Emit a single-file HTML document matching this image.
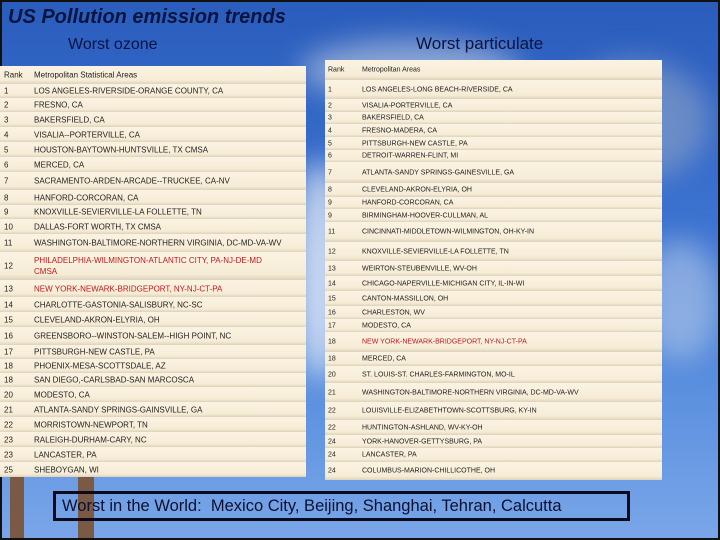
<!DOCTYPE html><html><head><style>
body{margin:0;width:720px;height:540px;overflow:hidden;font-family:"Liberation Sans",sans-serif}
#bg{position:absolute;left:0;top:0;width:720px;height:540px;background:linear-gradient(180deg,#2a5cbc 0%,#3c72d0 40%,#5d92e0 75%,#7aa6e8 100%);}
.cl{position:absolute;border-radius:50%;filter:blur(14px);background:rgba(235,240,248,.8)}
.r{position:absolute;background:linear-gradient(180deg,#fbf3e2 0%,#f6ecd6 80%,#ddd3bd 100%);color:#222;white-space:nowrap}
.r span{position:absolute;top:50%;transform:translateY(-50%)}
.L{left:0;width:306px;font-size:8px}
.L .a{left:4px}.L .b{left:34px}
.R{left:325px;width:337px;font-size:7px}
.R .a{left:3px}.R .b{left:37px}
.red{color:#c0191c}
</style></head><body>
<div id="bg"></div>
<div class="cl" style="left:300px;top:40px;width:220px;height:60px;background:rgba(200,210,225,.6)"></div>
<div class="cl" style="left:560px;top:60px;width:150px;height:120px;background:rgba(160,175,200,.5)"></div>
<div class="cl" style="left:295px;top:160px;width:50px;height:220px"></div>
<div class="cl" style="left:640px;top:240px;width:80px;height:120px;background:rgba(200,215,235,.5)"></div>
<div style="position:absolute;left:10px;top:470px;width:14px;height:70px;background:#7a5a44"></div>
<div style="position:absolute;left:78px;top:470px;width:16px;height:70px;background:#7a5a44"></div>
<div style="position:absolute;left:0;top:0;width:720px;height:540px;box-sizing:border-box;border:2px solid #111"></div>
<div style="position:absolute;left:8px;top:6px;font-size:20px;font-weight:bold;font-style:italic;color:#0a1440">US Pollution emission trends</div>
<div style="position:absolute;left:68px;top:36px;font-size:16px;color:#0a1440">Worst ozone</div>
<div style="position:absolute;left:416px;top:34px;font-size:17px;color:#0a1440">Worst particulate</div>

<div class="r L" style="top:66px;height:18px"><span class="a">Rank</span><span class="b">Metropolitan Statistical Areas</span></div>
<div class="r L" style="top:84px;height:14px"><span class="a">1</span><span class="b">LOS ANGELES-RIVERSIDE-ORANGE COUNTY, CA</span></div>
<div class="r L" style="top:98px;height:14px"><span class="a">2</span><span class="b">FRESNO, CA</span></div>
<div class="r L" style="top:112px;height:15px"><span class="a">3</span><span class="b">BAKERSFIELD, CA</span></div>
<div class="r L" style="top:127px;height:15px"><span class="a">4</span><span class="b">VISALIA--PORTERVILLE, CA</span></div>
<div class="r L" style="top:142px;height:15px"><span class="a">5</span><span class="b">HOUSTON-BAYTOWN-HUNTSVILLE, TX CMSA</span></div>
<div class="r L" style="top:157px;height:15px"><span class="a">6</span><span class="b">MERCED, CA</span></div>
<div class="r L" style="top:172px;height:18px"><span class="a">7</span><span class="b">SACRAMENTO-ARDEN-ARCADE--TRUCKEE, CA-NV</span></div>
<div class="r L" style="top:190px;height:15px"><span class="a">8</span><span class="b">HANFORD-CORCORAN, CA</span></div>
<div class="r L" style="top:205px;height:14px"><span class="a">9</span><span class="b">KNOXVILLE-SEVIERVILLE-LA FOLLETTE, TN</span></div>
<div class="r L" style="top:219px;height:15px"><span class="a">10</span><span class="b">DALLAS-FORT WORTH, TX CMSA</span></div>
<div class="r L" style="top:234px;height:18px"><span class="a">11</span><span class="b">WASHINGTON-BALTIMORE-NORTHERN VIRGINIA, DC-MD-VA-WV</span></div>
<div class="r L" style="top:252px;height:28px"><span class="a">12</span><span class="b red" style="line-height:11px">PHILADELPHIA-WILMINGTON-ATLANTIC CITY, PA-NJ-DE-MD<br>CMSA</span></div>
<div class="r L" style="top:280px;height:17px"><span class="a">13</span><span class="b red">NEW YORK-NEWARK-BRIDGEPORT, NY-NJ-CT-PA</span></div>
<div class="r L" style="top:297px;height:15px"><span class="a">14</span><span class="b">CHARLOTTE-GASTONIA-SALISBURY, NC-SC</span></div>
<div class="r L" style="top:312px;height:15px"><span class="a">15</span><span class="b">CLEVELAND-AKRON-ELYRIA, OH</span></div>
<div class="r L" style="top:327px;height:18px"><span class="a">16</span><span class="b">GREENSBORO--WINSTON-SALEM--HIGH POINT, NC</span></div>
<div class="r L" style="top:345px;height:14px"><span class="a">17</span><span class="b">PITTSBURGH-NEW CASTLE, PA</span></div>
<div class="r L" style="top:359px;height:14px"><span class="a">18</span><span class="b">PHOENIX-MESA-SCOTTSDALE, AZ</span></div>
<div class="r L" style="top:373px;height:14px"><span class="a">18</span><span class="b">SAN DIEGO,-CARLSBAD-SAN MARCOSCA</span></div>
<div class="r L" style="top:387px;height:15px"><span class="a">20</span><span class="b">MODESTO, CA</span></div>
<div class="r L" style="top:402px;height:15px"><span class="a">21</span><span class="b">ATLANTA-SANDY SPRINGS-GAINSVILLE, GA</span></div>
<div class="r L" style="top:417px;height:15px"><span class="a">22</span><span class="b">MORRISTOWN-NEWPORT, TN</span></div>
<div class="r L" style="top:432px;height:15px"><span class="a">23</span><span class="b">RALEIGH-DURHAM-CARY, NC</span></div>
<div class="r L" style="top:447px;height:15px"><span class="a">23</span><span class="b">LANCASTER, PA</span></div>
<div class="r L" style="top:462px;height:15px"><span class="a">25</span><span class="b">SHEBOYGAN, WI</span></div>

<div class="r R" style="top:60px;height:20px"><span class="a">Rank</span><span class="b">Metropolitan Areas</span></div>
<div class="r R" style="top:80px;height:19px"><span class="a">1</span><span class="b">LOS ANGELES-LONG BEACH-RIVERSIDE, CA</span></div>
<div class="r R" style="top:99px;height:13px"><span class="a">2</span><span class="b">VISALIA-PORTERVILLE, CA</span></div>
<div class="r R" style="top:112px;height:12px"><span class="a">3</span><span class="b">BAKERSFIELD, CA</span></div>
<div class="r R" style="top:124px;height:13px"><span class="a">4</span><span class="b">FRESNO-MADERA, CA</span></div>
<div class="r R" style="top:137px;height:13px"><span class="a">5</span><span class="b">PITTSBURGH-NEW CASTLE, PA</span></div>
<div class="r R" style="top:150px;height:12px"><span class="a">6</span><span class="b">DETROIT-WARREN-FLINT, MI</span></div>
<div class="r R" style="top:162px;height:21px"><span class="a">7</span><span class="b">ATLANTA-SANDY SPRINGS-GAINESVILLE, GA</span></div>
<div class="r R" style="top:183px;height:14px"><span class="a">8</span><span class="b">CLEVELAND-AKRON-ELYRIA, OH</span></div>
<div class="r R" style="top:197px;height:12px"><span class="a">9</span><span class="b">HANFORD-CORCORAN, CA</span></div>
<div class="r R" style="top:209px;height:13px"><span class="a">9</span><span class="b">BIRMINGHAM-HOOVER-CULLMAN, AL</span></div>
<div class="r R" style="top:222px;height:20px"><span class="a">11</span><span class="b">CINCINNATI-MIDDLETOWN-WILMINGTON, OH-KY-IN</span></div>
<div class="r R" style="top:242px;height:19px"><span class="a">12</span><span class="b">KNOXVILLE-SEVIERVILLE-LA FOLLETTE, TN</span></div>
<div class="r R" style="top:261px;height:15px"><span class="a">13</span><span class="b">WEIRTON-STEUBENVILLE, WV-OH</span></div>
<div class="r R" style="top:276px;height:15px"><span class="a">14</span><span class="b">CHICAGO-NAPERVILLE-MICHIGAN CITY, IL-IN-WI</span></div>
<div class="r R" style="top:291px;height:15px"><span class="a">15</span><span class="b">CANTON-MASSILLON, OH</span></div>
<div class="r R" style="top:306px;height:13px"><span class="a">16</span><span class="b">CHARLESTON, WV</span></div>
<div class="r R" style="top:319px;height:13px"><span class="a">17</span><span class="b">MODESTO, CA</span></div>
<div class="r R" style="top:332px;height:20px"><span class="a">18</span><span class="b red">NEW YORK-NEWARK-BRIDGEPORT, NY-NJ-CT-PA</span></div>
<div class="r R" style="top:352px;height:14px"><span class="a">18</span><span class="b">MERCED, CA</span></div>
<div class="r R" style="top:366px;height:17px"><span class="a">20</span><span class="b">ST. LOUIS-ST. CHARLES-FARMINGTON, MO-IL</span></div>
<div class="r R" style="top:383px;height:19px"><span class="a">21</span><span class="b">WASHINGTON-BALTIMORE-NORTHERN VIRGINIA, DC-MD-VA-WV</span></div>
<div class="r R" style="top:402px;height:18px"><span class="a">22</span><span class="b">LOUISVILLE-ELIZABETHTOWN-SCOTTSBURG, KY-IN</span></div>
<div class="r R" style="top:420px;height:15px"><span class="a">22</span><span class="b">HUNTINGTON-ASHLAND, WV-KY-OH</span></div>
<div class="r R" style="top:435px;height:13px"><span class="a">24</span><span class="b">YORK-HANOVER-GETTYSBURG, PA</span></div>
<div class="r R" style="top:448px;height:14px"><span class="a">24</span><span class="b">LANCASTER, PA</span></div>
<div class="r R" style="top:462px;height:18px"><span class="a">24</span><span class="b">COLUMBUS-MARION-CHILLICOTHE, OH</span></div>

<div style="position:absolute;left:53px;top:491px;width:565px;height:24px;border:3px solid #0a0a1a;font-size:16.5px;color:#0c1030;line-height:24px;padding-left:6px;box-sizing:content-box">Worst in the World:&nbsp; Mexico City, Beijing, Shanghai, Tehran, Calcutta</div>
</body></html>
